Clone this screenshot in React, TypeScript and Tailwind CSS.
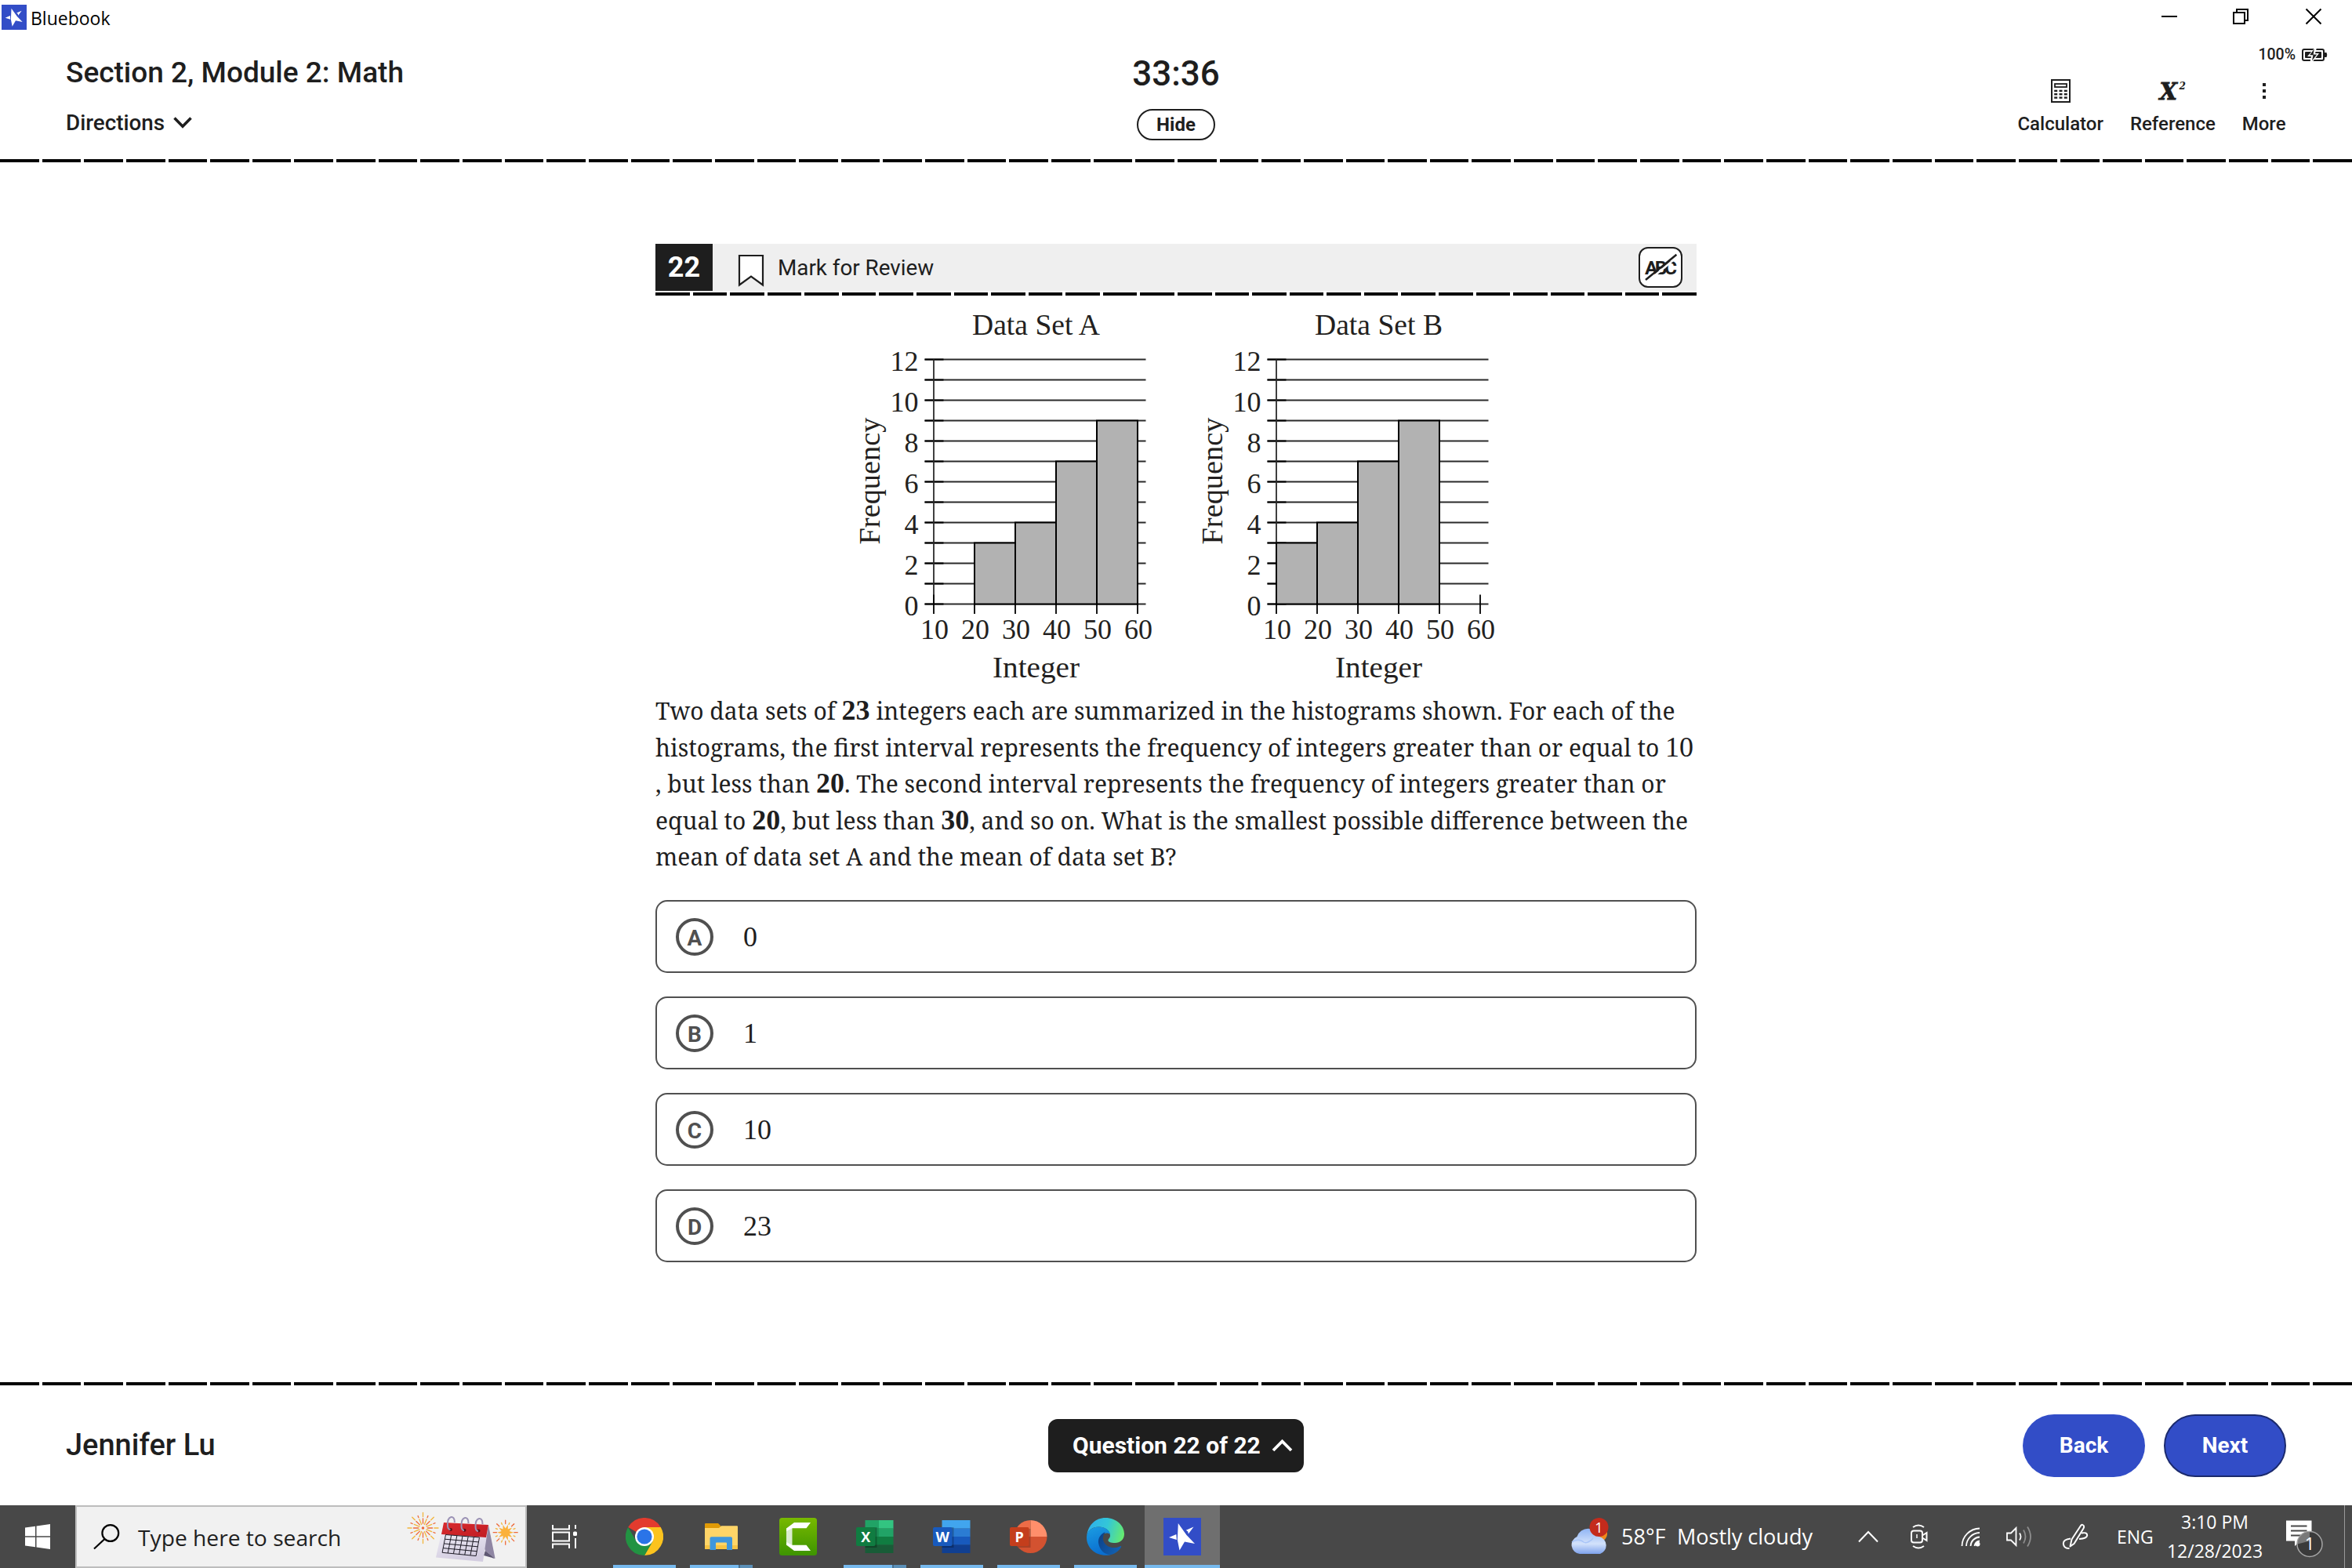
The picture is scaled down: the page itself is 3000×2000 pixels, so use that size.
import type { ReactNode } from "react";

const SERIF = "font-['Liberation_Serif',serif]";
const UI = "font-['Open_Sans','Noto_Sans',sans-serif]";

function Dashes({ className }: { className: string }) {
  return <div className={`h-1 w-full shrink-0 ${className}`} />;
}

const PAGE_DASH =
  "bg-[repeating-linear-gradient(90deg,#000_0,#000_calc(100%/56-4px),#fff_calc(100%/56-4px),#fff_calc(100%/56))] bg-[length:3004px_4px]";
const CARD_DASH =
  "bg-[repeating-linear-gradient(90deg,#000_0,#000_calc(100%/28-4px),#fff_calc(100%/28-4px),#fff_calc(100%/28))] bg-[length:1332px_4px]";

function BluebookLogo({ size }: { size: number }) {
  return (
    <svg width={size} height={size} viewBox="0 0 48 48" className="shrink-0">
      <rect width="48" height="48" fill="#324dc7" />
      <path d="M18.8 7 L29.5 22 L40 33 L27 30.5 L20.5 41.5 L17.8 28 Z" fill="#fff" />
      <path d="M7 25 L16.4 21 L16.8 28 Z" fill="#fff" />
      <path d="M38.5 11.5 L28.8 15.8 L31.2 17.6 L31.8 20.6 Z" fill="#fff" />
    </svg>
  );
}

/* ---------- Window title bar and test header ---------- */

function TitleBar() {
  return (
    <div className="flex h-11 shrink-0 items-center pl-0.5">
      <BluebookLogo size={32} />
      <span className={`ml-[5px] pt-0.5 text-[23px] leading-8 text-black ${UI}`}>Bluebook</span>
      <div className="ml-auto flex items-center pr-[38px] pb-0.5">
        <svg width="22" height="22" viewBox="0 0 22 22"><path d="M1 11h20" stroke="#000" strokeWidth="2" /></svg>
        <svg width="22" height="22" viewBox="0 0 22 22" className="ml-[69px]" fill="none" stroke="#000" strokeWidth="2">
          <path d="M2 6h14v14H2zM6 6V2h14v14h-4" />
        </svg>
        <svg width="22" height="22" viewBox="0 0 22 22" className="ml-[71px]"><path d="M1.5 1.5l19 19M20.5 1.5l-19 19" stroke="#000" strokeWidth="2" /></svg>
      </div>
    </div>
  );
}

function Tool({ label, children }: { label: string; children: ReactNode }) {
  return (
    <div className="flex flex-col items-center">
      <div className="flex h-[30px] items-center">{children}</div>
      <span className="mt-3 text-2xl leading-[30px] font-medium">{label}</span>
    </div>
  );
}

function Header() {
  return (
    <header className="grid h-[159px] shrink-0 grid-cols-3 text-[#1e1e1e]">
      <div className="flex flex-col pt-[26.5px] pl-[84px]">
        <h1 className="text-[37px] leading-[44px] font-medium">Section 2, Module 2: Math</h1>
        <div className="mt-6 flex items-center gap-[11px]">
          <span className="text-[27.8px] leading-9 font-medium">Directions</span>
          <svg width="24" height="15" viewBox="0 0 24 15"><path d="M1.5 1.5L12 12.2L22.5 1.5" fill="none" stroke="#1e1e1e" strokeWidth="3.6" /></svg>
        </div>
      </div>
      <div className="flex flex-col items-center pt-[25px]">
        <span className="text-[44px] leading-[50px] font-medium">33:36</span>
        <button className="mt-5 h-10 w-[100px] rounded-[20px] border-2 border-[#1e1e1e] text-2xl leading-9 font-bold">Hide</button>
      </div>
      <div className="flex flex-col items-end pt-[14px]">
        <div className="flex items-center gap-2 pr-[31px]">
          <span className="text-[19.5px] leading-6 font-medium">100%</span>
          <svg width="33" height="16" viewBox="0 0 33 16">
            <rect x="1" y="1" width="27" height="14" rx="2" fill="none" stroke="#1e1e1e" strokeWidth="2" />
            <rect x="4" y="4" width="21" height="8" rx="1" fill="#1e1e1e" />
            <path d="M29 5h2.5q1.5 3 0 6H29z" fill="#1e1e1e" />
            <path d="M16.5 -1L7 10H12L10.500 17H13.500L22 6H17L19 -1z" fill="#fff" />
            <path d="M15.8 0.5L10 8.2H14.5L13 15.5L19.2 7.6H14.6z" fill="#1e1e1e" />
          </svg>
        </div>
        <div className="mt-[19px] flex gap-[34px] pr-[84.5px]">
          <Tool label="Calculator">
            <svg width="25" height="30" viewBox="0 0 25 30" fill="#1e1e1e">
              <rect x="1" y="1" width="23" height="28" fill="none" stroke="#1e1e1e" strokeWidth="2" />
              <rect x="5" y="6" width="15" height="4" fill="none" stroke="#1e1e1e" strokeWidth="1.8" />
              {[13.7, 18, 22.4].map((y) => [4.2, 10.5, 16.8].map((x) => <rect key={`${x}-${y}`} x={x} y={y} width="4" height="2.4" />))}
            </svg>
          </Tool>
          <Tool label="Reference">
            <svg width="48" height="44" viewBox="0 0 48 44" className="font-['DejaVu_Serif',serif] font-bold italic" fill="#1e1e1e">
              <text x="7.5" y="33" fontSize="29" stroke="#1e1e1e" strokeWidth="0.8">X</text>
              <text x="32.5" y="20" fontSize="12">2</text>
            </svg>
          </Tool>
          <Tool label="More">
            <svg width="6" height="22" viewBox="0 0 6 22" fill="#1e1e1e">
              <rect x="1" y="1" width="4" height="4" /><rect x="1" y="9" width="4" height="4" /><rect x="1" y="17" width="4" height="4" />
            </svg>
          </Tool>
        </div>
      </div>
    </header>
  );
}

/* ---------- Histograms ---------- */

const STEP = 26;
const COL = 52;

function Histogram({ title, bars }: { title: string; bars: number[] }) {
  const x0 = 99;
  const y0 = 393.5;
  const right = 369.5;
  return (
    <svg width="437" height="507" viewBox="-20 0 437 507" className={`shrink-0 ${SERIF}`} fill="#231f20">
      <text x="229.5" y="49.5" fontSize="37.5" textAnchor="middle" textLength="163" lengthAdjust="spacingAndGlyphs">{title}</text>
      {Array.from({ length: 13 }, (_, i) => (
        <g key={i}>
          <path d={`M87.5 ${y0 - i * STEP}H${right}`} stroke="#2b2b2b" strokeWidth="1.8" />
          <path d={`M87.5 ${y0 - i * STEP}H111.5`} stroke="#000" strokeWidth="2" />
        </g>
      ))}
      <path d={`M${x0} ${y0 - 12 * STEP}V${y0}`} stroke="#2b2b2b" strokeWidth="1.8" />
      {[0, 1, 2, 3, 4, 5].map((i) => (
        <path key={i} d={`M${x0 + i * COL} ${y0 - 12}V${y0 + 12.5}`} stroke="#000" strokeWidth="1.8" />
      ))}
      {bars.map((v, i) =>
        v > 0 ? <rect key={i} x={x0 + i * COL} y={y0 - v * STEP} width={COL} height={v * STEP} fill="#b2b2b2" stroke="#000" strokeWidth="2" /> : null,
      )}
      {[0, 2, 4, 6, 8, 10, 12].map((v) => (
        <text key={v} x="79.5" y={y0 - v * STEP + 14.5} fontSize="36" textAnchor="end">{v}</text>
      ))}
      {[10, 20, 30, 40, 50, 60].map((v, i) => (
        <text key={v} x={x0 + 1 + i * COL} y="438" fontSize="36" textAnchor="middle">{v}</text>
      ))}
      <text x="229.5" y="487" fontSize="38" textAnchor="middle" textLength="111" lengthAdjust="spacingAndGlyphs">Integer</text>
      <text transform="translate(29.500 317.500) rotate(-90)" fontSize="37.500" textLength="162" lengthAdjust="spacingAndGlyphs">Frequency</text>
    </svg>
  );
}

/* ---------- Question ---------- */

function Num({ children, bold = true }: { children: ReactNode; bold?: boolean }) {
  return <span className={`text-4xl leading-none ${SERIF} ${bold ? "font-bold" : ""}`}>{children}</span>;
}

function Choice({ letter, value }: { letter: string; value: string }) {
  return (
    <div className="flex h-[93px] items-center rounded-[15px] border-2 border-[#505050] pl-6">
      <span className="flex size-12 items-center justify-center rounded-full border-4 border-[#505050] pt-1 text-[28px] leading-none font-bold text-[#505050]">{letter}</span>
      <span className={`ml-[38px] text-4xl leading-10 text-[#1e1e1e] ${SERIF}`}>{value}</span>
    </div>
  );
}

function Question() {
  return (
    <main className="flex min-h-0 flex-1 flex-col items-center pt-[104px]">
      <section className="flex w-[1328px] flex-col">
        <div className="flex h-[60px] items-center bg-[#efefef]">
          <div className="flex h-full w-[73px] items-center justify-center bg-[#1e1e1e] text-4xl font-bold text-white">22</div>
          <svg width="34" height="42" viewBox="0 0 34 42" className="mt-2 ml-8"><path d="M2 2H32V39.5L17 28.5L2 39.5Z" fill="#fff" stroke="#1e1e1e" strokeWidth="2.2" /></svg>
          <span className="ml-[17px] pt-0.5 text-[27.8px] leading-9 text-[#1e1e1e]">Mark for Review</span>
          <div className="mr-[18px] ml-auto flex h-[52px] w-14 items-center justify-center rounded-xl border-2 border-[#1e1e1e] bg-white">
            <svg width="50" height="40" viewBox="-3 -2 50 40" className="font-['Roboto',sans-serif] font-bold">
              <text x="2" y="26.7" fontSize="24.5" letterSpacing="-3.6" fill="#1e1e1e">ABC</text>
              <path d="M5.5 36L44.500 3.800" stroke="#fff" strokeWidth="2.5" />
              <path d="M3 34L42.4 1.800" stroke="#1e1e1e" strokeWidth="2.5" />
            </svg>
          </div>
        </div>
        <Dashes className={`mt-0.5 ${CARD_DASH}`} />
        <div className="flex h-[507px] justify-center pl-[17px]">
          <Histogram title="Data Set A" bars={[0, 3, 4, 7, 9]} />
          <Histogram title="Data Set B" bars={[3, 4, 7, 9, 0]} />
        </div>
        <p className="font-['Noto_Serif','DejaVu_Serif',serif] text-[30px] leading-[46.5px] whitespace-nowrap text-[#1e1e1e]">
          Two data sets of <Num>23</Num> integers each are summarized in the histograms shown. For each of the
          <br />
          histograms, the first interval represents the frequency of integers greater than or equal to <Num bold={false}>10</Num>
          <br />, but less than <Num>20</Num>. The second interval represents the frequency of integers greater than or
          <br />
          equal to <Num>20</Num>, but less than <Num>30</Num>, and so on. What is the smallest possible difference between the
          <br />
          mean of data set A and the mean of data set B?
        </p>
        <div className="mt-[31.5px] flex flex-col gap-[30px]">
          <Choice letter="A" value="0" />
          <Choice letter="B" value="1" />
          <Choice letter="C" value="10" />
          <Choice letter="D" value="23" />
        </div>
      </section>
    </main>
  );
}

function Footer() {
  return (
    <footer className="grid h-[153px] shrink-0 grid-cols-3 items-center">
      <span className="pl-[84px] text-[38px] font-medium text-[#1e1e1e]">Jennifer Lu</span>
      <button className="flex h-[68px] w-[326px] items-center justify-self-center rounded-xl bg-[#1e1e1e] pl-[31px] text-[30px] leading-none font-bold text-white">
        <span className="whitespace-nowrap">Question 22 of 22</span>
        <svg width="27" height="17" viewBox="0 0 27 17" className="ml-3.5"><path d="M2 15L13.5 3.5L25 15" fill="none" stroke="#fff" strokeWidth="3.8" /></svg>
      </button>
      <div className="flex justify-end gap-6 pr-[84px] text-[28px] font-bold text-white">
        <button className="h-20 w-[156px] rounded-[40px] bg-[#324dc7]">Back</button>
        <button className="h-20 w-[156px] rounded-[40px] border-2 border-[#1b2a6d] bg-[#324dc7]">Next</button>
      </div>
    </footer>
  );
}

/* ---------- Windows taskbar ---------- */

function Firework({ cx, cy, r, star }: { cx: number; cy: number; r: number; star?: boolean }) {
  return (
    <g strokeLinecap="round">
      {Array.from({ length: 16 }, (_, i) => {
        const a = (i * Math.PI) / 8;
        const c = Math.cos(a);
        const s = Math.sin(a);
        const odd = i % 2 === 1;
        const inner = star ? 0.72 : odd ? 0.25 : 0.3;
        const outer = odd ? 0.86 : 1;
        return (
          <g key={i}>
            <path d={`M${cx + c * r * inner} ${cy + s * r * inner}L${cx + c * r * (star ? outer : 0.62)} ${cy + s * r * (star ? outer : 0.62)}`} stroke={odd ? "#f2b53c" : "#ee6a3a"} strokeWidth="1.3" />
            {!star && <path d={`M${cx + c * r * 0.74} ${cy + s * r * 0.74}L${cx + c * r * outer} ${cy + s * r * outer}`} stroke={odd ? "#ee6a3a" : "#f2b53c"} strokeWidth="1.3" />}
          </g>
        );
      })}
      {star && (
        <polygon
          fill="#fbb13a"
          points={Array.from({ length: 20 }, (_, i) => {
            const a = (i * Math.PI) / 10;
            const q = i % 2 ? r * 0.34 : r * 0.68;
            return `${cx + Math.cos(a) * q},${cy + Math.sin(a) * q}`;
          }).join(" ")}
        />
      )}
      {!star && <circle cx={cx} cy={cy} r="1.8" fill="#ee6a3a" />}
    </g>
  );
}

function SearchArt() {
  return (
    <svg width="144" height="76" viewBox="518 1922 144 76" className="mr-2 ml-auto shrink-0">
      <defs>
        <linearGradient id="page" x1="0" y1="0" x2="0.3" y2="1"><stop offset="0" stopColor="#f6f4fb" /><stop offset="1" stopColor="#d3cde0" /></linearGradient>
        <linearGradient id="red" x1="0" y1="0" x2="1" y2="1"><stop offset="0" stopColor="#d92b2e" /><stop offset="1" stopColor="#c01c24" /></linearGradient>
      </defs>
      <Firework cx={539.5} cy={1949} r={19.5} />
      <Firework cx={644.7} cy={1954.7} r={15.5} star />
      <path d="M623 1945L631.6 1988L619 1978L612 1960Z" fill="#8f86a3" />
      <path d="M619 1978L631.6 1988L617 1984Z" fill="#5f5873" />
      <path d="M566 1942L623 1945L616 1992L556 1986.5Z" fill="url(#page)" />
      <path d="M566 1942L623 1945L620 1961L563 1957Z" fill="url(#red)" />
      <g stroke="#1d1b26" strokeWidth="1" fill="none">
        {[0, 1, 2, 3, 4].map((i) => <path key={i} d={`M${568.5 - i * 1.1} ${1957.5 + i * 5.7}L${611.5 - i * 1.1} ${1961 + i * 5.9}`} />)}
        {[0, 1, 2, 3, 4, 5, 6].map((i) => <path key={i} d={`M${568.5 + i * 7.17} ${1957.5 + i * 0.6}L${564.1 + i * 7.17} ${1980.3 + i * 0.72}`} />)}
      </g>
      {[575.4, 593, 611].map((x, i) => (
        <g key={x}>
          <circle cx={x - 0.5} cy={1951 + i * 0.8} r="2" fill="#5a0f16" />
          <path d={`M${x - 4.5} ${1946 + i}C${x - 5} ${1932 + i} ${x + 5} ${1932 + i} ${x + 4.5} ${1942 + i}M${x - 4.5} ${1945 + i}C${x - 4.5} ${1949 + i} ${x - 3} ${1951 + i} ${x - 1} ${1951 + i}`} fill="none" stroke="#9c93b5" strokeWidth="2" />
        </g>
      ))}
    </svg>
  );
}

function Slot({ bar, active, children }: { bar: "full" | "single" | "stack" | "none"; active?: boolean; children: ReactNode }) {
  return (
    <div className={`flex h-20 w-24 shrink-0 flex-col items-center ${active ? "bg-[#6f6f6f]" : ""}`}>
      <div className="flex h-[76px] items-center pt-1">{children}</div>
      {bar === "full" && <div className="h-1 w-full bg-[#76b9ed]" />}
      {bar === "single" && <div className="h-1 w-20 bg-[#76b9ed]" />}
      {bar === "stack" && (
        <div className="flex h-1 w-20"><div className="flex-1 bg-[#76b9ed]" /><div className="w-[18px] border-l-2 border-[#48708f] bg-[#5b8fb7]" /></div>
      )}
    </div>
  );
}

function OfficeIcon({ letter, rows, badge }: { letter: string; rows: [string, string][]; badge: string }) {
  return (
    <svg width="48" height="42" viewBox="0 0 48 42" className="font-['Open_Sans',sans-serif] font-bold">
      {rows.map(([l, r], i) => (
        <g key={i}>
          <rect x="11.5" y={i * 10.5} width="18" height="10.7" fill={l} />
          <rect x="29" y={i * 10.5} width="18.5" height="10.7" fill={r} />
        </g>
      ))}
      <rect x="11.5" y="9" width="15" height="26" fill="#000" opacity="0.25" />
      <rect y="9" width="24.5" height="24" rx="2" fill={badge} />
      <text x="12.2" y="27.5" fontSize="18" fill="#fff" textAnchor="middle">{letter}</text>
    </svg>
  );
}

function PowerPointIcon() {
  return (
    <svg width="48" height="42" viewBox="0 0 48 42" className="font-['Open_Sans',sans-serif] font-bold">
      <path d="M26.5 21V0A21 21 0 0 0 5.5 21Z" fill="#ed6c47" />
      <path d="M26.5 21V0A21 21 0 0 1 47.5 21Z" fill="#ff8f6b" />
      <path d="M5.5 21A21 21 0 0 0 47.5 21Z" fill="#d35230" />
      <path d="M8 11H26.5V35H11A21 21 0 0 1 8 11Z" fill="#000" opacity="0.2" />
      <rect y="9" width="24.5" height="24" rx="2" fill="#c43e1c" />
      <text x="12.2" y="27.5" fontSize="18" fill="#fff" textAnchor="middle">P</text>
    </svg>
  );
}

function ChromeIcon() {
  return (
    <svg width="48" height="48" viewBox="0 0 48 48">
      <path d="M24 24L3.2 12A24 24 0 0 1 44.8 12H24Z" fill="#e33b2e" />
      <path d="M24 12H44.8A24 24 0 0 1 24 48L34.4 30Z" fill="#fcc31e" />
      <path d="M34.4 30L24 48A24 24 0 0 1 3.2 12L13.6 30Z" fill="#229342" />
      <circle cx="24" cy="24" r="12" fill="#fff" />
      <circle cx="24" cy="24" r="9.6" fill="#2a74e8" />
    </svg>
  );
}

function EdgeIcon() {
  return (
    <svg width="48" height="48" viewBox="0 0 48 48">
      <defs>
        <linearGradient id="edgeTop" x1="0" y1="0.4" x2="1" y2="0.6"><stop offset="0" stopColor="#2fb0ea" /><stop offset="0.5" stopColor="#33c6d8" /><stop offset="1" stopColor="#66eb6e" /></linearGradient>
        <linearGradient id="edgeMid" x1="0" y1="0" x2="0.3" y2="1"><stop offset="0" stopColor="#1b9de2" /><stop offset="1" stopColor="#0a6fd0" /></linearGradient>
        <linearGradient id="edgeLow" x1="0" y1="0" x2="1" y2="0.6"><stop offset="0" stopColor="#0c3f85" /><stop offset="1" stopColor="#1260b0" /></linearGradient>
      </defs>
      <path d="M0.5 22C2 9 11.5 0 24 0C38 0 48 10 48 20.5C48 28 42.5 32 36.5 32C30 32 27.5 30.5 27.5 28.5C27.5 27 30 26 30 22.5C30 16 23 11.5 15.5 11.5C8 11.5 2.5 15.5 0.5 22Z" fill="url(#edgeTop)" />
      <path d="M0 25C0 17 7 11.5 15.5 11.5C23.5 11.5 29.5 16 30 21C26 17.5 17 20 16.5 29C16.3 38 23 45.5 30.5 47.2C14 50.5 0 40 0 25Z" fill="url(#edgeMid)" />
      <path d="M24 18.3C18 20 14.5 26 15 31.5C15.8 40 22.5 47 30 47.2C36 46 41 42.5 44 37.5C44.6 36.5 43.8 35.6 42.8 36.2C33 41 22.5 36 21 28C20.5 24 21.5 21 24 18.3Z" fill="url(#edgeLow)" />
    </svg>
  );
}

function Taskbar() {
  return (
    <div className={`flex h-20 shrink-0 items-center bg-[#484848] text-white ${UI}`}>
      <div className="flex w-24 shrink-0 justify-center">
        <svg width="32" height="32" viewBox="0 0 32 32" fill="#fff"><path d="M0 4.5L13 2.7V15.3H0zM14.5 2.5L32 0V15.3H14.5zM0 16.7H13V29.3L0 27.5zM14.5 16.7H32V32L14.5 29.5z" /></svg>
      </div>
      <div className="flex h-20 w-[576px] shrink-0 items-center border-2 border-[#bdbdbd] bg-[#f1f1f1] pl-5">
        <svg width="36" height="36" viewBox="0 0 36 36" fill="none" stroke="#000" strokeWidth="2.2"><circle cx="22.8" cy="13.5" r="10.4" /><path d="M15.5 21L2 33.5" /></svg>
        <span className="ml-[22px] pt-0.5 text-[28.2px] leading-9 text-[#1f1f1f]">Type here to search</span>
        <SearchArt />
      </div>
      <div className="mr-1.5 flex w-24 shrink-0 justify-center">
        <svg width="32" height="32" viewBox="0 0 32 32" fill="none" stroke="#fff" strokeWidth="2"><path d="M1 1V6.5H22V1M1 31V25.5H22V31M1 10.5H22V21.5H1zM30 1V6M30 18V31" /><rect x="27" y="9.5" width="5" height="5.5" rx="1.5" fill="#fff" stroke="none" /></svg>
      </div>
      <div className="flex gap-0.5">
        <Slot bar="single"><ChromeIcon /></Slot>
        <Slot bar="stack">
          <svg width="42" height="34" viewBox="0 0 42 34">
            <path d="M0 1Q0 0 1 0H17L20 3V8H0z" fill="#e09a06" />
            <path d="M0 6H18L21 3.3H41Q42 3.3 42 4.3V32Q42 33 41 33H1Q0 33 0 32z" fill="#ffd568" />
            <path d="M0 28H42V32Q42 33 41 33H1Q0 33 0 32z" fill="#f7c443" />
            <path d="M6.5 34V19Q6.5 17.3 8.5 17.3H33Q35 17.3 35 19V34H28V25.5Q28 24.5 27 24.5H15Q14 24.5 14 25.5V34z" fill="#3f97dd" />
          </svg>
        </Slot>
        <Slot bar="none">
          <svg width="48" height="48" viewBox="0 0 48 48">
            <defs><linearGradient id="cam" x1="0" y1="0" x2="0" y2="1"><stop offset="0" stopColor="#78b900" /><stop offset="1" stopColor="#3d9400" /></linearGradient></defs>
            <rect width="48" height="48" rx="3.5" fill="url(#cam)" />
            <path d="M9 13.5L16.5 12V36L9 34.5z" fill="#dcecd0" />
            <path d="M9 13.5L19 6H40L34.5 13.3H16.5L9 17zM9 34.5L19 42H40L34.5 34.7H16.5L9 31z" fill="#fff" />
          </svg>
        </Slot>
        <Slot bar="stack"><OfficeIcon letter="X" badge="#107c41" rows={[["#21a366", "#33c481"], ["#1b8f56", "#21a366"], ["#107c41", "#107c41"], ["#185c37", "#185c37"]]} /></Slot>
        <Slot bar="single"><OfficeIcon letter="W" badge="#185abd" rows={[["#41a5ee", "#41a5ee"], ["#2b7cd3", "#2b7cd3"], ["#185abd", "#185abd"], ["#103f91", "#103f91"]]} /></Slot>
        <Slot bar="single"><PowerPointIcon /></Slot>
        <Slot bar="single"><EdgeIcon /></Slot>
        <Slot bar="full" active><BluebookLogo size={48} /></Slot>
      </div>

      <div className="ml-[447px] flex items-center text-[27px] leading-9">
        <svg width="49" height="48" viewBox="0 0 49 48" className="mr-4">
          <defs><linearGradient id="cloud" x1="0" y1="0" x2="0" y2="1"><stop offset="0" stopColor="#8fb4f4" /><stop offset="0.6" stopColor="#d3e2fb" /><stop offset="1" stopColor="#7ea2ec" /></linearGradient></defs>
          <circle cx="36" cy="20" r="11" fill="#f08a1c" />
          <path d="M12 46A11.5 11.5 0 0 1 8.5 24A15 15 0 0 1 37 24A11.5 11.5 0 0 1 38 46Z" fill="url(#cloud)" />
          <path d="M2 31C6 27.5 13 27 17 31C20 33 26 30 29 26" fill="none" stroke="#a9c5f8" strokeWidth="1.5" />
          <circle cx="36.5" cy="12" r="12" fill="#c42b1c" />
          <text x="36.5" y="18.5" fontSize="18" fill="#fff" textAnchor="middle">1</text>
        </svg>
        <span className="w-[71px]">58°F</span>
        <span className="w-[231px] whitespace-nowrap">Mostly cloudy</span>
      </div>
      <svg width="26" height="16" viewBox="0 0 26 16" fill="none" stroke="#fff" strokeWidth="2"><path d="M1 14.5L13 2L25 14.5" /></svg>
      <svg width="24" height="32" viewBox="0 0 24 32" className="ml-10" fill="none" stroke="#fff" strokeWidth="2"><rect x="2" y="8.5" width="14" height="15" rx="3" /><path d="M16 14.5L21.5 11V21L16 17.5M4 4Q11 -1 18 4M4 28Q11 33 18 28" /><path d="M9 13v5" strokeWidth="1.5" /></svg>
      <svg width="26" height="26" viewBox="0 0 26 26" className="ml-[41px]" fill="none" stroke="#fff" strokeWidth="1.8"><path d="M1.5 25A23 23 0 0 1 24 2.5M7 25A17.5 17.5 0 0 1 24 8M12.5 25A12 12 0 0 1 24 13.5M17.5 25A8 8 0 0 1 24 18.5" /><circle cx="21.5" cy="22.5" r="3" fill="#fff" stroke="none" /></svg>
      <svg width="34" height="30" viewBox="0 0 34 30" className="ml-8" fill="none" stroke="#fff" strokeWidth="1.8"><path d="M1 10.5H6L12.5 4V26L6 19.5H1Z" /><path d="M17 10.5Q20 15 17 19.5" /><path d="M22 6.5Q27 15 22 23.5M27 2.5Q35 15 27 27.5" stroke="#8d8d8d" /></svg>
      <svg width="34" height="34" viewBox="0 0 34 34" className="ml-[37px]" fill="none" stroke="#fff" strokeWidth="2" strokeLinejoin="round"><path d="M10.5 29.5L12.5 20.5L24 3Q26.5 0.5 28 3.5Q28.5 5 27.5 6.5L15.5 26Z" /><path d="M11 19.5Q1.500 20.5 1.8 26Q2.5 32.5 9.5 32M25 12.5Q32.5 11 32.2 15.5Q31.5 19.5 22 20" /></svg>
      <span className="ml-9 w-12 text-[23px]">ENG</span>
      <div className="ml-4 flex w-[122px] flex-col items-center text-[23px] leading-[37px] whitespace-nowrap">
        <span>3:10 PM</span>
        <span>12/28/2023</span>
      </div>
      <svg width="52" height="50" viewBox="0 0 52 50" className="mt-[5px] ml-[28px]">
        <path d="M2 1.5H34.5V27.5H20L13 34V27.5H2z" fill="#fff" />
        <path d="M8 8.5H28.5M8 14.5H28.5M8 20.5H22" stroke="#484848" strokeWidth="2" />
        <circle cx="32" cy="31.5" r="16" fill="#3a3a3a" stroke="#a5a5a5" strokeWidth="1.5" />
        <path d="M16.5 31.5A15.5 15.5 0 0 1 32 16V27.5z" fill="#8a8a8a" opacity="0.8" />
        <text x="32" y="39" fontSize="22" fill="#fff" textAnchor="middle">1</text>
      </svg>
      <div className="mr-[9px] ml-auto h-20 w-px bg-[#9a9a9a]" />
    </div>
  );
}

export default function App() {
  return (
    <div className="flex h-[2000px] w-[3000px] flex-col overflow-hidden bg-white font-['Roboto',sans-serif]">
      <TitleBar />
      <Header />
      <Dashes className={PAGE_DASH} />
      <Question />
      <Dashes className={PAGE_DASH} />
      <Footer />
      <Taskbar />
    </div>
  );
}
